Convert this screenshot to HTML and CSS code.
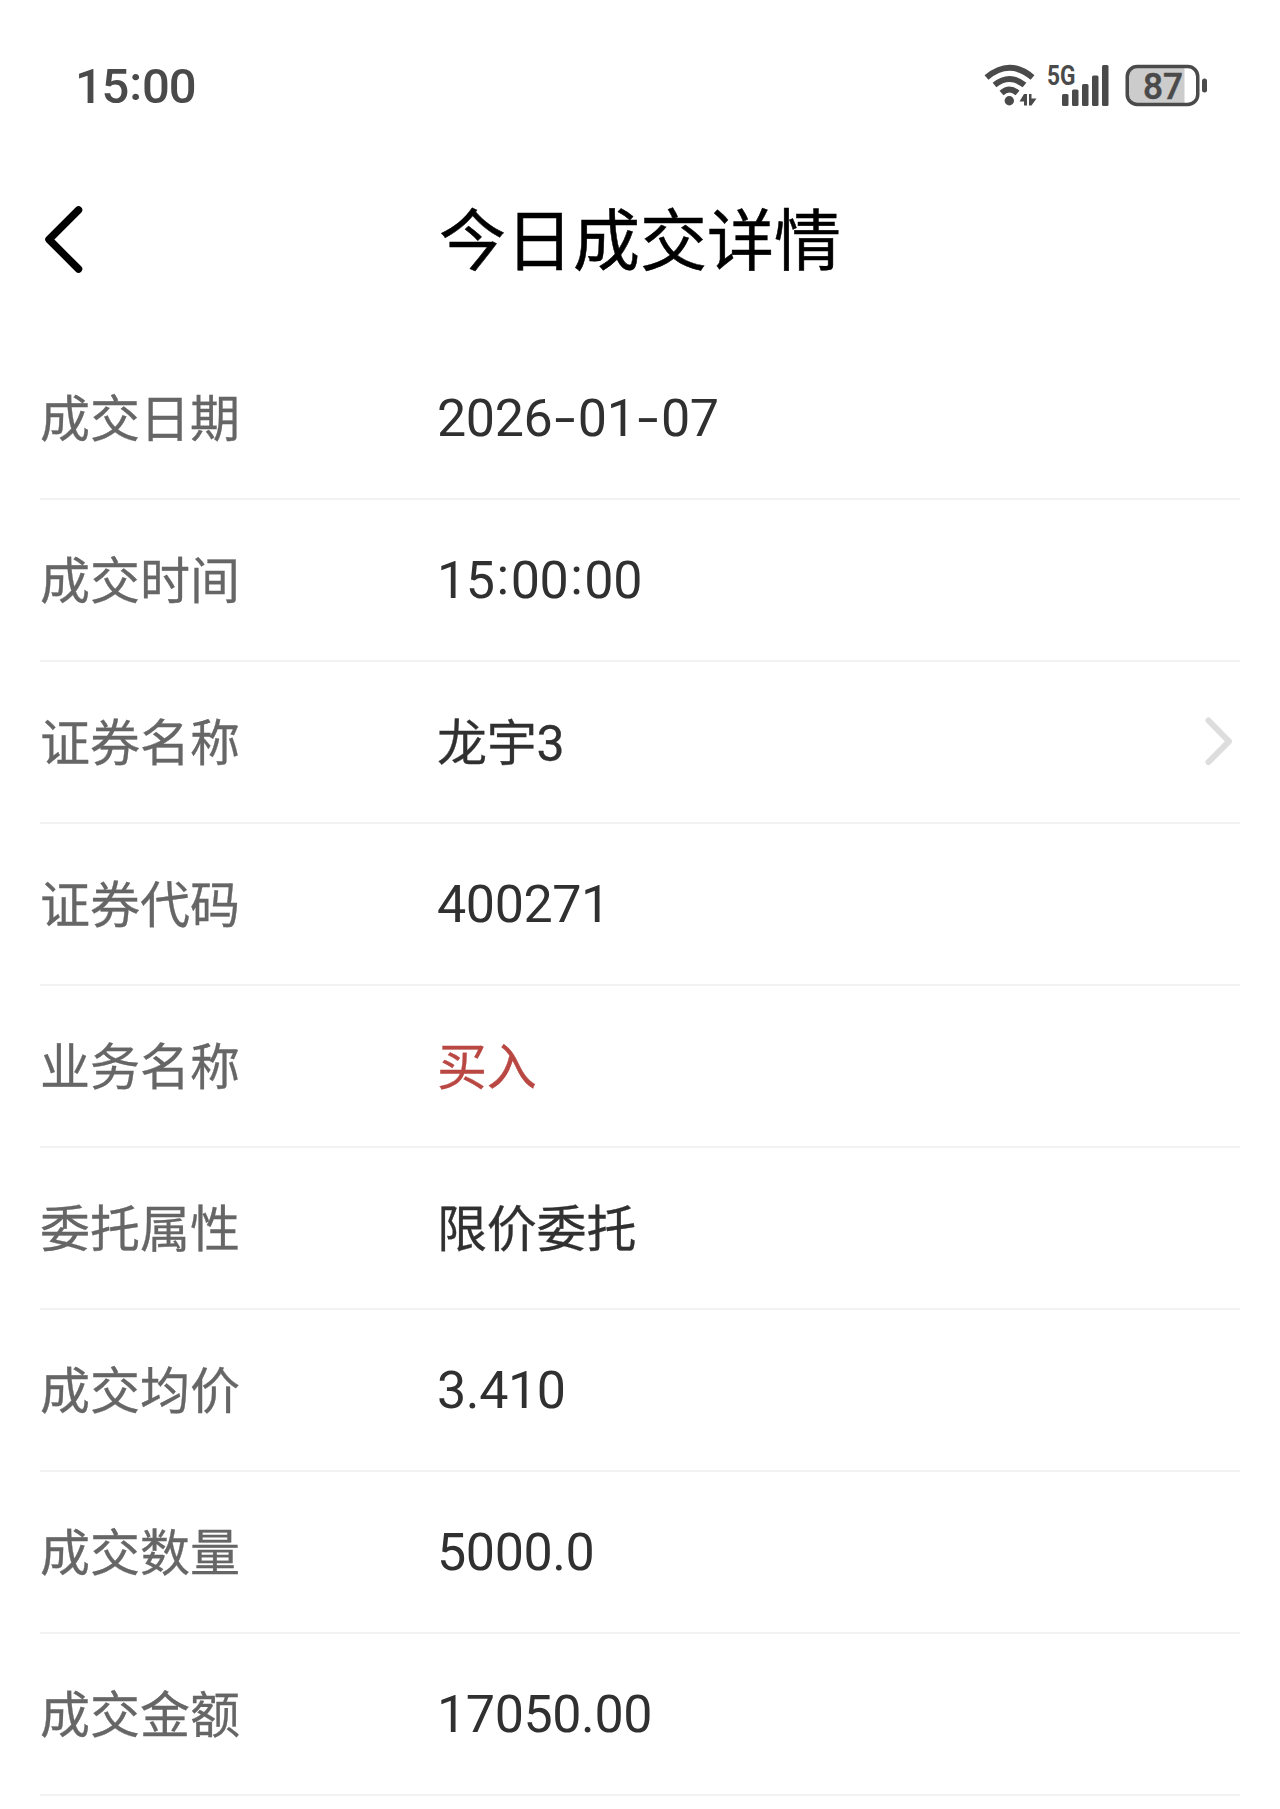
FILE: index.html
```html
<!DOCTYPE html>
<html lang="zh-CN">
<head>
<meta charset="utf-8">
<title>今日成交详情</title>
<link rel="stylesheet" href="styles.css">
</head>
<body>
<header class="status">
  <span class="clock">15<span class="colon">:</span>00</span>
  <svg class="indicators" width="230" height="50" viewBox="980 60 230 50" aria-hidden="true">
    <g fill="none" stroke="#4a4a4a" stroke-width="6">
      <path d="M986.500 77.500Q1009.500 58 1032.500 77.500M994.500 85Q1009.500 73 1024.500 85M1001.500 93Q1009.500 86 1017.500 93"/>
    </g>
    <g fill="#4a4a4a">
      <circle cx="1009.3" cy="100.7" r="4.7"/>
      <path d="M1024 94H1027V105.5H1024V101.5H1019.5ZM1029 94H1031.500V98.500H1036.500L1031.500 105.500H1029Z"/>
      <rect x="1062" y="94" width="6.500" height="12" rx="1.500"/>
      <rect x="1072" y="89.500" width="6.500" height="16.500" rx="1.500"/>
      <rect x="1082" y="84" width="6.500" height="22" rx="1.500"/>
      <rect x="1092" y="75.500" width="6.500" height="30.500" rx="1.500"/>
      <rect x="1102" y="65" width="6.500" height="41" rx="1.500"/>
      <rect x="1202" y="78.500" width="5" height="14" rx="2.500"/>
    </g>
    <text class="network" x="1047" y="85" textLength="28.500" lengthAdjust="spacingAndGlyphs">5G</text>
    <path d="M1137 66.500H1184.500V104.500H1137Q1127 104.500 1127 94.500V76.500Q1127 66.500 1137 66.500Z" fill="#ccc"/>
    <rect x="1127.250" y="66.500" width="70.500" height="38" rx="10" fill="none" stroke="#4a4a4a" stroke-width="3.500"/>
    <text class="charge" x="1143" y="98.500" textLength="40" lengthAdjust="spacingAndGlyphs">87</text>
  </svg>
</header>
<nav class="titlebar">
  <svg class="back" width="44" height="72" viewBox="0 0 44 72" aria-label="返回"><path d="M38.500 6L9 35.500L38.500 65" fill="none" stroke="#000" stroke-width="7.500" stroke-linecap="round" stroke-linejoin="round"/></svg>
  <h1>今日成交详情</h1>
</nav>
<main class="details">
  <div class="row"><span class="label">成交日期</span><span class="value">2026<span class="dash">-</span>01<span class="dash">-</span>07</span></div>
  <div class="row"><span class="label">成交时间</span><span class="value">15<span class="colon">:</span>00<span class="colon">:</span>00</span></div>
  <div class="row"><span class="label">证券名称</span><span class="value text">龙宇3</span><svg class="more" width="36" height="52" viewBox="0 0 36 52" aria-hidden="true"><path d="M4.500 4.500L25 25.300L4.500 46" fill="none" stroke="#ddd" stroke-width="6" stroke-linecap="round" stroke-linejoin="round"/></svg></div>
  <div class="row"><span class="label">证券代码</span><span class="value">400271</span></div>
  <div class="row"><span class="label">业务名称</span><span class="value text buy">买入</span></div>
  <div class="row"><span class="label">委托属性</span><span class="value text">限价委托</span></div>
  <div class="row"><span class="label">成交均价</span><span class="value">3.410</span></div>
  <div class="row"><span class="label">成交数量</span><span class="value">5000.0</span></div>
  <div class="row"><span class="label">成交金额</span><span class="value">17050.00</span></div>
</main>
</body>
</html>
```
FILE: styles.css
```css
* { box-sizing: border-box; }
body { margin: 0; background: #fff; color: #303030; font-family: Roboto, "Noto Sans CJK SC", sans-serif; }
.status { height: 160px; padding: 60px 70px 0 75px; display: flex; justify-content: space-between; }
.clock { font-size: 49px; line-height: 54px; font-weight: 500; letter-spacing: -1.3px; color: #4a4a4a; }
.network { font: 700 27px Roboto, sans-serif; fill: #4a4a4a; }
.charge { font: 500 37px Roboto, sans-serif; fill: #4a4a4a; stroke: #4a4a4a; stroke-width: .5px; }
.titlebar { height: 178px; padding: 0 40px; display: grid; grid-template-columns: 44px 1fr 44px; align-items: start; }
.back { margin-top: 44px; }
h1 { margin: 32px 0 0; font-size: 67px; line-height: 100px; font-weight: 400; text-align: center; color: #000; -webkit-text-stroke: .5px #000; }
.details { padding: 0 40px; }
.row { height: 162px; border-bottom: 2px solid #f2f2f2; display: grid; grid-template-columns: 397px 1fr 36px; align-items: center; font-size: 50px; }
.label { padding-bottom: 6px; color: #666; -webkit-text-stroke: .3px #666; }
.value { padding-top: 1px; font-size: 52px; letter-spacing: -.4px; }
.value.text { padding: 0 0 7px; font-size: 50px; letter-spacing: -.2px; -webkit-text-stroke: .3px currentColor; }
.value.buy { color: #b94742; }
.colon { display: inline-block; width: 16px; text-align: center; transform: translateY(-4px); }
.clock .colon { width: 14px; transform: translateY(-3px); }
.dash { display: inline-block; width: 25.5px; text-align: center; transform: scaleX(1.45); }
```
